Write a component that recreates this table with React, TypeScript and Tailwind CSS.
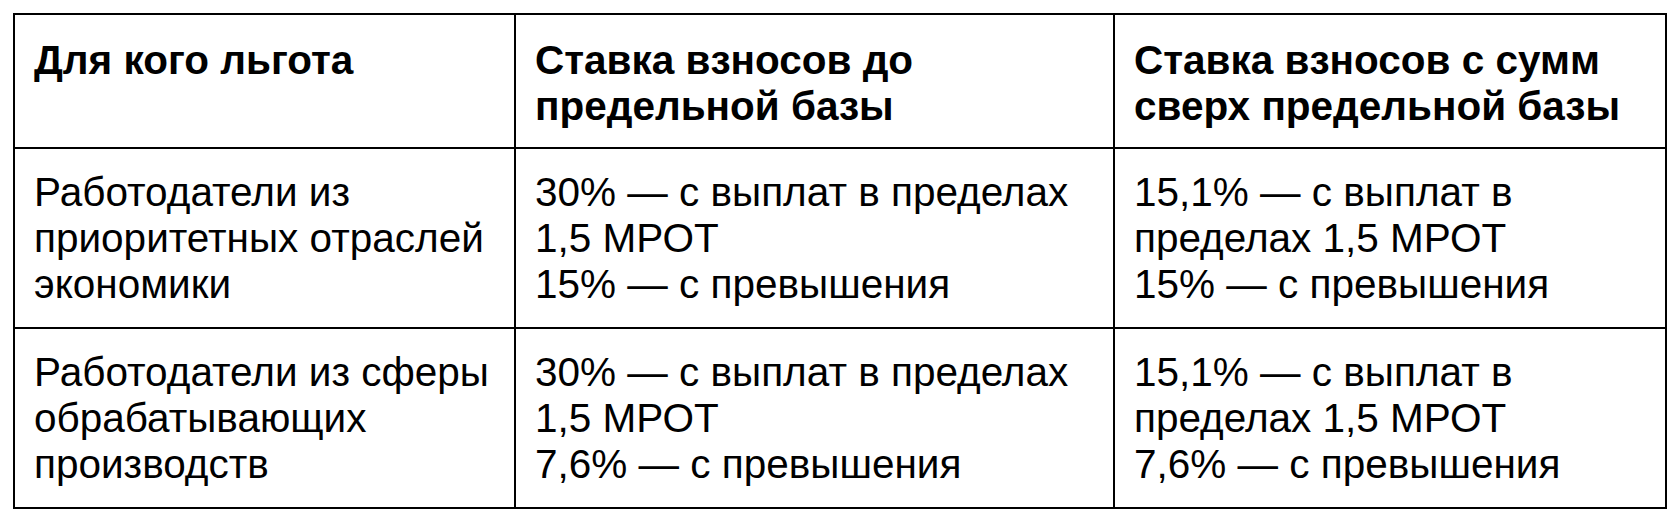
const rows = [
  {
    who: ["Работодатели из", "приоритетных отраслей", "экономики"],
    base: ["30% — с выплат в пределах", "1,5 МРОТ", "15% — с превышения"],
    over: ["15,1% — с выплат в", "пределах 1,5 МРОТ", "15% — с превышения"],
  },
  {
    who: ["Работодатели из сферы", "обрабатывающих", "производств"],
    base: ["30% — с выплат в пределах", "1,5 МРОТ", "7,6% — с превышения"],
    over: ["15,1% — с выплат в", "пределах 1,5 МРОТ", "7,6% — с превышения"],
  },
];

function Lines({ items }: { items: string[] }) {
  return (
    <>
      {items.map((t, i) => (
        <div key={i} className="whitespace-nowrap">{t}</div>
      ))}
    </>
  );
}

export default function App() {
  return (
    <div className="h-[526px] w-[1680px] bg-white pl-[13px] pt-[13px] font-['Liberation_Sans',Arial,sans-serif] text-[40.5px] leading-[46px] text-black">
      <table className="w-[1652px] table-fixed border-collapse">
        <colgroup>
          <col className="w-[501px]" />
          <col className="w-[599px]" />
          <col className="w-[552px]" />
        </colgroup>
        <thead>
          <tr className="h-[133px]">
            <th className="border-2 border-black px-[19px] pt-[22px] pb-[18px] text-left align-top font-bold">Для кого льгота</th>
            <th className="border-2 border-black px-[19px] pt-[22px] pb-[18px] text-left align-top font-bold">
              <Lines items={["Ставка взносов до", "предельной базы"]} />
            </th>
            <th className="border-2 border-black px-[19px] pt-[22px] pb-[18px] text-left align-top font-bold">
              <Lines items={["Ставка взносов с сумм", "сверх предельной базы"]} />
            </th>
          </tr>
        </thead>
        <tbody>
          {rows.map((r, i) => (
            <tr key={i} className="h-[180px]">
              <td className="border-2 border-black px-[19px] py-[20px] align-top"><Lines items={r.who} /></td>
              <td className="border-2 border-black px-[19px] py-[20px] align-top"><Lines items={r.base} /></td>
              <td className="border-2 border-black px-[19px] py-[20px] align-top"><Lines items={r.over} /></td>
            </tr>
          ))}
        </tbody>
      </table>
    </div>
  );
}
